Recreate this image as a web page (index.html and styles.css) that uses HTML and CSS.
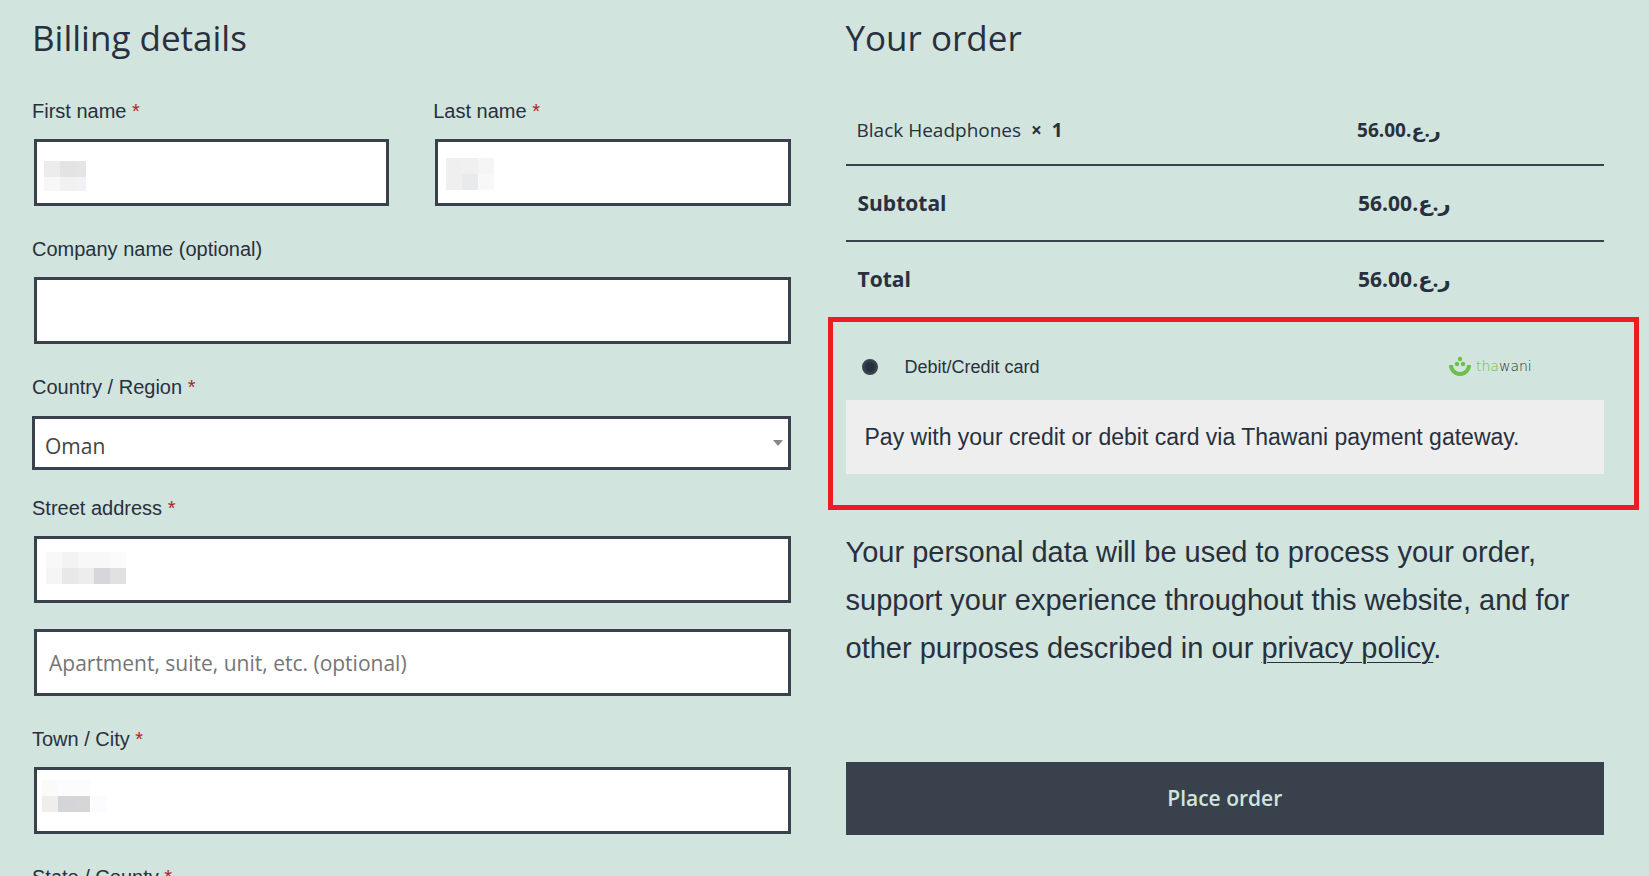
FILE: index.html
```html
<!DOCTYPE html>
<html lang="en">
<head>
<meta charset="utf-8">
<meta name="viewport" content="width=device-width, initial-scale=1">
<title>Checkout</title>
<link rel="stylesheet" href="styles.css">
</head>
<body>
<form class="checkout">
  <section class="billing">
    <h2 class="heading">Billing details</h2>
    <div class="fields">
      <div class="name-row">
        <div class="field">
          <label class="label" for="first">First name <span class="required">*</span></label>
          <div class="control">
            <input class="input" id="first" type="text">
            <svg class="mask" width="60" height="40" shape-rendering="crispEdges" aria-hidden="true"><path fill="#ececec" d="M7 19h16v16H7z"/><path fill="#e3e3e3" d="M23 19h16v16H23z"/><path fill="#e4e5e7" d="M39 19h10v16H39z"/><path fill="#f7f7f7" d="M7 35h16v14H7z"/><path fill="#f1f1f1" d="M23 35h16v14H23z"/><path fill="#f1f2f5" d="M39 35h10v14H39z"/></svg>
          </div>
        </div>
        <div class="field">
          <label class="label" for="last">Last name <span class="required">*</span></label>
          <div class="control">
            <input class="input" id="last" type="text">
            <svg class="mask" width="60" height="40" shape-rendering="crispEdges" aria-hidden="true"><path fill="#efefef" d="M8 16h16v32H8z"/><path fill="#f0f0f0" d="M24 16h16v16H24z"/><path fill="#f5f5f5" d="M40 16h16v16H40z"/><path fill="#e9eaec" d="M24 32h16v16H24z"/><path fill="#f8f8f8" d="M40 32h16v16H40z"/></svg>
          </div>
        </div>
      </div>
      <div class="field">
        <label class="label" for="company">Company name (optional)</label>
        <div class="control"><input class="input" id="company" type="text"></div>
      </div>
      <div class="field field-country">
        <label class="label" for="country">Country / Region <span class="required">*</span></label>
        <div class="select-wrap">
          <select class="select" id="country"><option>Oman</option></select>
          <svg class="arrow" width="10" height="6" viewBox="0 0 10 6" aria-hidden="true"><path fill="#888" d="M0 0h10L5 6z"/></svg>
        </div>
      </div>
      <div class="field">
        <label class="label" for="street">Street address <span class="required">*</span></label>
        <div class="control">
          <input class="input" id="street" type="text">
          <svg class="mask" width="100" height="40" shape-rendering="crispEdges" aria-hidden="true"><path fill="#f8f8f8" d="M9 13h16v16H9zM41 13h32v16H41z"/><path fill="#f3f3f3" d="M25 13h16v16H25z"/><path fill="#fafcfb" d="M73 13h16v16H73z"/><path fill="#f4f6f5" d="M9 29h16v16H9z"/><path fill="#e8e8e8" d="M25 29h16v16H25z"/><path fill="#ededed" d="M41 29h16v16H41z"/><path fill="#d6d7da" d="M57 29h16v16H57z"/><path fill="#e1e1e1" d="M73 29h16v16H73z"/></svg>
        </div>
      </div>
      <div class="control">
        <input class="input" id="apartment" type="text" aria-label="Apartment, suite, unit, etc. (optional)" placeholder="Apartment, suite, unit, etc. (optional)">
      </div>
      <div class="field">
        <label class="label" for="city">Town / City <span class="required">*</span></label>
        <div class="control">
          <input class="input" id="city" type="text">
          <svg class="mask" width="80" height="40" shape-rendering="crispEdges" aria-hidden="true"><path fill="#fafaf8" d="M5 10h16v16H5z"/><path fill="#fcfcfc" d="M21 10h32v16H21z"/><path fill="#efeeec" d="M5 26h16v16H5z"/><path fill="#d4d5d9" d="M21 26h16v16H21z"/><path fill="#d6d6d6" d="M37 26h16v16H37z"/><path fill="#fbfcff" d="M53 26h16v16H53z"/></svg>
        </div>
      </div>
      <div class="field">
        <label class="label" for="state">State / County <span class="required">*</span></label>
        <div class="control"><input class="input" id="state" type="text"></div>
      </div>
    </div>
  </section>

  <section class="order">
    <h2 class="heading">Your order</h2>
    <table class="totals">
      <tbody>
        <tr class="product"><td>Black Headphones&nbsp; <strong>× &nbsp;1</strong></td><td class="price">56.00.ر.ع</td></tr>
        <tr><th scope="row">Subtotal</th><td class="price">56.00.ر.ع</td></tr>
        <tr><th scope="row">Total</th><td class="price">56.00.ر.ع</td></tr>
      </tbody>
    </table>
    <div class="payment">
      <div class="method">
        <input class="radio" id="thawani" type="radio" name="payment" checked>
        <label class="method-label" for="thawani">Debit/Credit card</label>
        <svg class="logo" width="86" height="22" viewBox="0 0 86 22" role="img" aria-label="thawani">
          <g fill="#6cc04a"><circle cx="11" cy="3" r="2.2"/><circle cx="8" cy="8" r="2.2"/><circle cx="14" cy="8" r="2.2"/></g>
          <path d="M2 9a9 9 0 0 0 18 0" fill="none" stroke="#6cc04a" stroke-width="4"/>
          <text class="logo-text" x="27" y="15"><tspan fill="#6cc04a">tha</tspan><tspan fill="#28303d">wani</tspan></text>
        </svg>
      </div>
      <p class="description">Pay with your credit or debit card via Thawani payment gateway.</p>
    </div>
    <p class="privacy">Your personal data will be used to process your order, support your experience throughout this website, and for other purposes described in our <a class="link" href="#">privacy policy</a>.</p>
    <button class="submit" type="button">Place order</button>
  </section>
</form>
</body>
</html>
```
FILE: styles.css
```css
* {
  box-sizing: border-box;
}

html {
  height: 100%;
  overflow: hidden;
}

body {
  margin: 0;
  background: #d1e4dd;
  color: #28303d;
  font-family: "Liberation Sans", Arial, sans-serif;
}

.checkout {
  display: grid;
  grid-template-columns: minmax(0, 1fr) minmax(0, 1fr);
  column-gap: 55px;
  padding: 14px 45px 0 32px;
}

.heading {
  margin: 0 0 32px;
  font: 400 35px/48px "Open Sans", "Noto Sans", sans-serif;
}

.fields {
  display: flex;
  flex-direction: column;
  gap: 26px;
}

.name-row {
  display: grid;
  grid-template-columns: 1fr 1fr;
  column-gap: 44px;
}

.field {
  display: flex;
  flex-direction: column;
  gap: 10px;
}

.field-country {
  gap: 11px;
  margin-bottom: -5px;
}

.label {
  font-size: 20px;
  line-height: 35px;
}

.required {
  color: #b22222;
}

.control {
  position: relative;
  padding-left: 2px;
}

.input {
  display: block;
  width: 100%;
  height: 67px;
  padding: 0 12px;
  border: 3px solid #39414d;
  border-radius: 0;
  background: #fff;
  color: #28303d;
  font: 21px "Open Sans", "Noto Sans", sans-serif;
}

.input::placeholder {
  color: #757575;
  opacity: 1;
}

.mask {
  position: absolute;
  top: 3px;
  left: 5px;
  overflow: visible;
  pointer-events: none;
}

.select-wrap {
  position: relative;
}

.select {
  display: block;
  width: 100%;
  height: 54px;
  padding: 6px 10px 0;
  appearance: none;
  border: 3px solid #39414d;
  border-radius: 0;
  background: #fff;
  color: #444;
  font: 21px "Open Sans", "Noto Sans", sans-serif;
}

.arrow {
  position: absolute;
  top: 24px;
  right: 8px;
  pointer-events: none;
}

.totals {
  width: 100%;
  border-collapse: collapse;
  font: 700 21px/30px "Open Sans", "Noto Sans", "DejaVu Sans", sans-serif;
}

.totals th,
.totals td {
  width: 34%;
  padding: 22px 12px;
  border-bottom: 2px solid #39414d;
  text-align: left;
}

.totals th:first-child,
.totals td:first-child {
  width: 66%;
}

.totals .product td {
  padding: 21px 11px 19px;
  font-size: 19px;
}

.totals .product td:first-child {
  font-weight: 400;
}

.totals tr:last-child > * {
  padding-bottom: 23px;
  border-bottom: 0;
}

.payment {
  margin: 0 -35px 18px -18px;
  padding: 0 30px 31px 13px;
  border: 5px solid #ed1c24;
}

.method {
  display: flex;
  align-items: center;
  height: 78px;
  padding: 12px 69px 0 16px;
}

.radio {
  width: 16px;
  height: 16px;
  margin: 0;
  appearance: none;
  border: 3px solid #39414d;
  border-radius: 50%;
  background: #28303d;
}

.method-label {
  margin-left: 27px;
  font-size: 18px;
}

.logo {
  margin-left: auto;
}

.logo-text {
  font: 200 14px "DejaVu Sans", sans-serif;
}

.description {
  margin: 0;
  padding: 20px 19px;
  background: #eee;
  font-size: 23px;
  line-height: 34px;
}

.privacy {
  margin: 0 0 90px;
  font-size: 29px;
  line-height: 48px;
}

.link {
  color: inherit;
  text-decoration-thickness: 1px;
  text-underline-offset: 4px;
}

.submit {
  display: block;
  width: 100%;
  padding: 20px;
  border: 0;
  background: #39414d;
  color: #d1e4dd;
  font: 600 21px/33px "Open Sans", "Noto Sans", sans-serif;
}
```
